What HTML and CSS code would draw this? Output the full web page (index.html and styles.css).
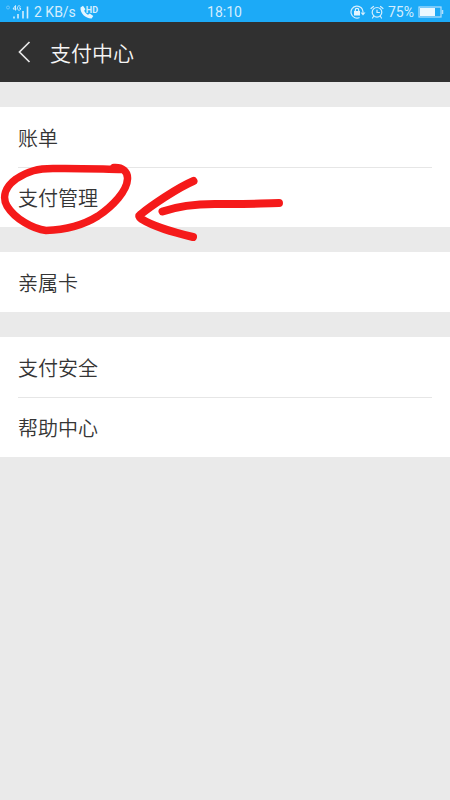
FILE: index.html
```html
<!DOCTYPE html>
<html lang="zh-CN">

<head>
    <meta charset="UTF-8">
    <meta name="viewport" content="width=device-width, initial-scale=1.0">
    <title>支付中心</title>
    <link rel="stylesheet" href="styles.css">
</head>

<body>
    <!-- Phone status bar -->
    <div class="status-bar">
        <div class="status-left">
            <svg class="signal-icon" width="25" height="16" viewBox="0 0 25 16" aria-hidden="true">
                <circle cx="3" cy="3.500" r="1.500" fill="none" stroke="#6cc6fa" stroke-width="1"/>
                <path d="M10.500 1.500L8 5h3.500M10.500 1.500v5M15.500 2.500c-1.500-1.500-3-.5-3 1.500s1.500 3 3 1.500V4h-1.500" fill="none" stroke="#d4eefe" stroke-width="1"/>
                <path d="M9 12.500v2M13 10v4.500M18 7v7.500M22.500 2.500v12" fill="none" stroke="#d4eefe" stroke-width="1.600"/>
            </svg>
            <span>2 KB/s</span>
            <span class="call">
                <svg width="14" height="14" viewBox="0 0 14 14" aria-hidden="true">
                    <path d="M.5 2.500L3 .8 5.400 4.200 4.200 5.800c.8 1.800 2 3 3.800 4l1.800-1.300 3.500 2.500-1.700 2.500C6 13.800 0 8.500 .5 2.500z" fill="#e4f5ff"/>
                </svg>
                <span class="hd">HD</span>
            </span>
        </div>
        <span class="time">18:10</span>
        <div class="status-right">
            <svg width="16" height="14" viewBox="0 0 16 14" aria-hidden="true">
                <path d="M9.500 12.500A6 6 0 1 1 13 7.500" fill="none" stroke="#d4eefe" stroke-width="1.200"/>
                <path d="M10.500 7.500h5L13 10.500z" fill="#d4eefe"/>
                <path d="M5.300 6.500V5a1.700 1.700 0 0 1 3.400 0v1.500" fill="none" stroke="#e4f5ff" stroke-width="1.200"/>
                <rect x="4" y="6" width="6" height="4.500" fill="#e4f5ff"/>
            </svg>
            <svg width="14" height="14" viewBox="0 0 14 14" aria-hidden="true">
                <g fill="none" stroke="#d4eefe" stroke-width="1.200" stroke-linecap="round">
                    <circle cx="7" cy="7.300" r="4.800"/>
                    <path d="M1 3.500L3.500 1.500M13 3.500L10.500 1.500M7 5v2.500h2.500M3.500 11.500l-1 1.500M10.500 11.500l1 1.500"/>
                </g>
            </svg>
            <span>75%</span>
            <svg width="26" height="12" viewBox="0 0 26 12" aria-hidden="true">
                <rect x="1" y="1" width="22" height="10" fill="none" stroke="#b4e0fc" stroke-width="1.200"/>
                <rect x="2" y="2" width="15" height="8" fill="#eaf8ff"/>
                <path d="M24.500 4v4" stroke="#b4e0fc" stroke-width="1.500"/>
            </svg>
        </div>
    </div>

    <!-- Title bar -->
    <header class="header">
        <a class="back" href="#" aria-label="返回">
            <svg width="14" height="22" viewBox="0 0 14 22" aria-hidden="true">
                <path d="M11.500 1L1.500 11l10 10" fill="none" stroke="#e6e6e6" stroke-width="1.700"/>
            </svg>
        </a>
        <h1>支付中心</h1>
    </header>

    <main class="menu">
        <nav class="group">
            <a class="row" href="#">账单</a>
            <a class="row marked" href="#">支付管理
                <!-- Hand-drawn circle and arrow -->
                <svg class="marker" width="290" height="90" viewBox="0 160 290 90" aria-hidden="true">
                    <g fill="none" stroke="#f51a1a" stroke-linecap="round" stroke-linejoin="round">
                        <path d="M114 167.500C122 167 128 171 127.500 179C127 191 113 206 98 216C82 226 62 230 46 230.500C33 229 15 219 7 206C2 197 5 187 16 179C28 171 38 168.500 53 168.500C78 168 98 169 122 169.500" stroke-width="7.500"/>
                        <path d="M193.500 181C177 188 151 206 140.500 214.500C138.500 216 139 217 141.500 219C154 227 173 232 193 237M162.500 211.500C181 205 200 203.500 221 204C243 204.500 257 203.500 279 203" stroke-width="8"/>
                    </g>
                </svg>
            </a>
        </nav>
        <nav class="group">
            <a class="row" href="#">亲属卡</a>
        </nav>
        <nav class="group">
            <a class="row" href="#">支付安全</a>
            <a class="row" href="#">帮助中心</a>
        </nav>
    </main>
</body>

</html>
```

FILE: styles.css
```css
:root {
    --bg-color: #eaeaea;
    --bar-color: #1caaf7;
    --header-color: #303030;
    --text-color: #353535;
}

* {
    box-sizing: border-box;
}

body {
    margin: 0;
    background: var(--bg-color);
    color: var(--text-color);
    font-family: Roboto, "Noto Sans CJK SC", sans-serif;
    font-weight: 350;
}

/* Status bar */
.status-bar {
    display: grid;
    grid-template-columns: 1fr auto 1fr;
    align-items: center;
    height: 22px;
    padding: 0 6px 0 5px;
    background: var(--bar-color);
    color: #d4eefe;
    font-size: 14px;
    font-weight: 400;
    line-height: 24px;
}

.status-left,
.status-right {
    display: flex;
    align-items: center;
    gap: 4px;
}

.status-right {
    justify-content: flex-end;
}

.call {
    display: flex;
    align-items: center;
}

.hd {
    margin-left: -8px;
    padding-bottom: 4px;
    font-size: 9px;
    font-weight: bold;
    line-height: 9px;
}

/* Title bar */
.header {
    display: flex;
    align-items: center;
    gap: 18px;
    height: 60px;
    padding: 0 18px;
    background: var(--header-color);
}

.back {
    display: flex;
}

.header h1 {
    margin: 0;
    padding-top: 3px;
    color: #f5f5f5;
    font-size: 21px;
    font-weight: inherit;
    line-height: 30px;
}

/* Menu groups */
.menu {
    display: flex;
    flex-direction: column;
    gap: 25px;
    padding: 25px 0;
}

.group {
    padding: 0 18px;
    background: #fff;
}

.row {
    display: block;
    height: 60px;
    padding-top: 2px;
    color: inherit;
    font-size: 20px;
    line-height: 60px;
    text-decoration: none;
}

.row + .row {
    box-shadow: inset 0 1px #e6e6e6;
}

/* Marker strokes lie over the rows around them */
.marked {
    position: relative;
}

.marker {
    position: absolute;
    top: -7px;
    left: -18px;
    pointer-events: none;
}
```
